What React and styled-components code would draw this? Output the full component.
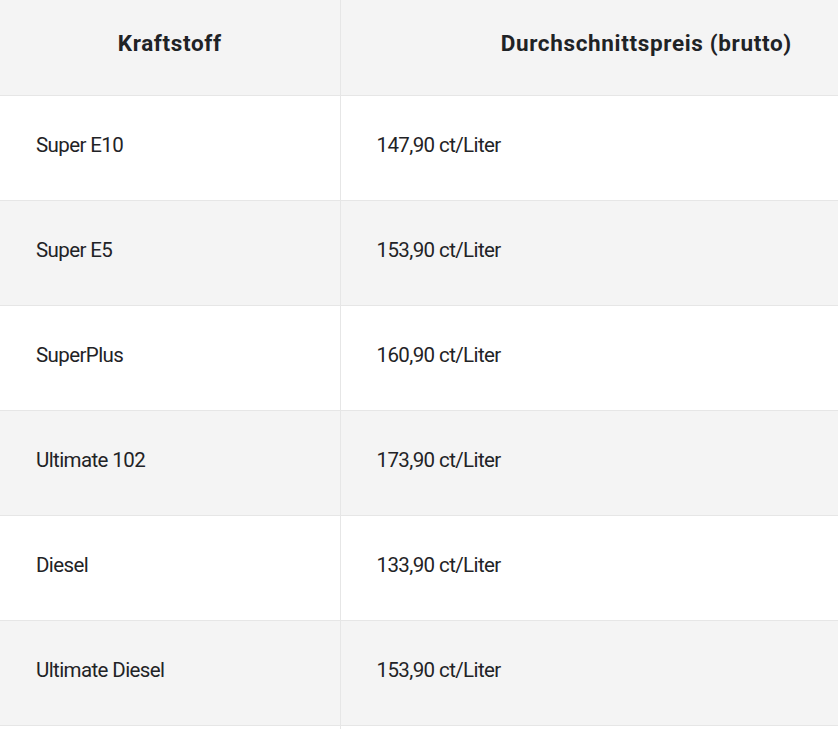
import React from "react";
import styled, { createGlobalStyle } from "styled-components";

const Global = createGlobalStyle`
  html, body { margin: 0; padding: 0; background: #fff; overflow: hidden; }
  body { font-family: Roboto, "Liberation Sans", Arial, sans-serif; color: #1d1d1f; }
`;

const Table = styled.table`
  width: 952px;
  border-collapse: collapse;
  table-layout: fixed;
`;

const HeadCell = styled.th`
  background: #f4f4f4;
  height: 95px;
  box-sizing: border-box;
  padding: 0 0 8px 0;
  font-size: 22.5px;
  font-weight: 700;
  color: #1f2326;
  text-align: center;
  vertical-align: middle;
  border-bottom: 1px solid #e6e6e6;
  border-left: ${(p) => (p.$first ? "none" : "1px solid #e6e6e6")};
  width: ${(p) => (p.$first ? "340px" : "auto")};
  letter-spacing: 0.65px;
`;

const Row = styled.tr`
  background: ${(p) => (p.$striped ? "#f4f4f4" : "#ffffff")};
`;

const Cell = styled.td`
  height: 105px;
  box-sizing: border-box;
  padding: 0 0 5px 36px;
  font-size: 20.5px;
  font-weight: 400;
  letter-spacing: -0.6px;
  color: #1f2326;
  vertical-align: middle;
  border-bottom: 1px solid #e6e6e6;
  border-left: ${(p) => (p.$first ? "none" : "1px solid #e6e6e6")};
`;

const rows = [
  ["Super E10", "147,90 ct/Liter"],
  ["Super E5", "153,90 ct/Liter"],
  ["SuperPlus", "160,90 ct/Liter"],
  ["Ultimate 102", "173,90 ct/Liter"],
  ["Diesel", "133,90 ct/Liter"],
  ["Ultimate Diesel", "153,90 ct/Liter"],
];

export default function App() {
  return (
    <>
      <Global />
      <Table>
        <thead>
          <tr>
            <HeadCell $first>Kraftstoff</HeadCell>
            <HeadCell>Durchschnittspreis (brutto)</HeadCell>
          </tr>
        </thead>
        <tbody>
          {rows.map(([fuel, price], i) => (
            <Row key={fuel} $striped={i % 2 === 1}>
              <Cell $first>{fuel}</Cell>
              <Cell>{price}</Cell>
            </Row>
          ))}
          <Row $striped={false}>
            <Cell $first />
            <Cell />
          </Row>
        </tbody>
      </Table>
    </>
  );
}
